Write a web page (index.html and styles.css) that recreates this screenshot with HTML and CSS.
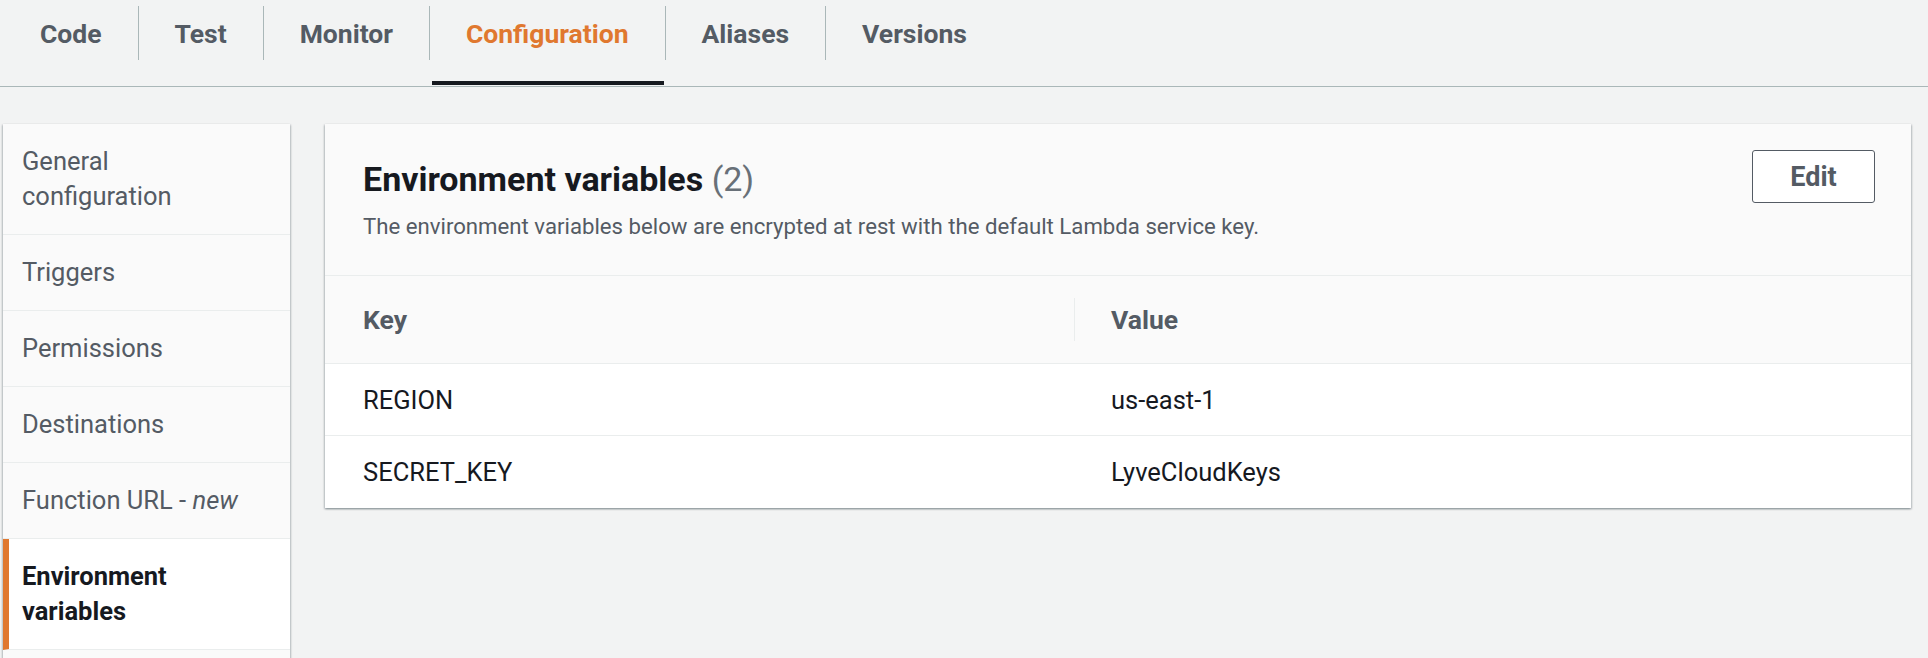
FILE: index.html
```html
<!DOCTYPE html>
<html lang="en">
<head>
<meta charset="utf-8">
<title>Lambda configuration</title>
<link rel="stylesheet" href="styles.css">
</head>
<body>
<nav class="tabs">
  <div class="tab"><span class="tab-label">Code</span><span class="tab-ind"></span></div>
  <div class="tab"><span class="tab-label sep">Test</span><span class="tab-ind"></span></div>
  <div class="tab"><span class="tab-label sep">Monitor</span><span class="tab-ind"></span></div>
  <div class="tab active"><span class="tab-label sep">Configuration</span><span class="tab-ind"></span></div>
  <div class="tab"><span class="tab-label sep">Aliases</span><span class="tab-ind"></span></div>
  <div class="tab"><span class="tab-label sep">Versions</span><span class="tab-ind"></span></div>
</nav>
<main class="main">
  <aside class="side">
    <div class="side-item">General<br>configuration</div>
    <div class="side-item">Triggers</div>
    <div class="side-item">Permissions</div>
    <div class="side-item">Destinations</div>
    <div class="side-item">Function URL - <em>new</em></div>
    <div class="side-item active">Environment<br>variables</div>
    <div class="side-item empty"></div>
  </aside>
  <section class="card">
    <header class="card-head">
      <div class="card-title">
        <h2 class="title">Environment variables <span class="count">(2)</span></h2>
        <p class="desc">The environment variables below are encrypted at rest with the default Lambda service key.</p>
      </div>
      <button class="btn">Edit</button>
    </header>
    <div class="table">
      <div class="th">Key</div>
      <div class="th"><span class="th-sep">Value</span></div>
      <div class="td">REGION</div>
      <div class="td td-val">us-east-1</div>
      <div class="td">SECRET_KEY</div>
      <div class="td td-val">LyveCloudKeys</div>
    </div>
  </section>
</main>
</body>
</html>
```
FILE: styles.css
```css
* { box-sizing: border-box; }
html, body { margin: 0; padding: 0; }
body {
  background: #f2f3f3;
  font-family: Roboto, "Liberation Sans", Arial, sans-serif;
  color: #16191f;
  width: 1928px;
  height: 658px;
  overflow: hidden;
}

/* Tabs */
.tabs {
  display: flex;
  padding-left: 4px;
  border-bottom: 1px solid #aab7b8;
  height: 87px;
}
.tab {
  display: flex;
  flex-direction: column;
  padding-top: 6px;
}
.tab-label {
  height: 54px;
  display: flex;
  align-items: center;
  padding: 0 36px;
  font-size: 26.5px;
  font-weight: 700;
  color: #545b64;
}
.tab-label.sep { border-left: 1px solid #aab7b8; }
.tab.active .tab-label { color: #e0782f; }
.tab-ind {
  height: 4px;
  margin: 21px 1px 0 3px;
}
.tab.active .tab-ind { background: #16191f; }

/* Main area */
.main {
  display: flex;
  gap: 35px;
  padding: 37px 17px 0 3px;
}

/* Side nav */
.side {
  width: 287px;
  flex: none;
  background: #fafafa;
  box-shadow: 0 1px 2px 0 rgba(0, 28, 36, 0.3), 1px 1px 2px 0 rgba(0, 28, 36, 0.15), -1px 1px 2px 0 rgba(0, 28, 36, 0.15);
}
.side-item {
  padding: 20px 8px 20px 19px;
  font-size: 25.5px;
  line-height: 35px;
  color: #545b64;
  border-bottom: 1px solid #eaeded;
}
.side-item em { font-style: italic; }
.side-item.active {
  background: #fff;
  color: #16191f;
  font-weight: 700;
  border-left: 6px solid #e0782f;
  padding-left: 13px;
}
.side-item.empty { height: 75px; }

/* Card */
.card {
  flex: 1;
  align-self: flex-start;
  background: #fff;
  box-shadow: 0 1px 2px 0 rgba(0, 28, 36, 0.3), 1px 1px 2px 0 rgba(0, 28, 36, 0.15), -1px 1px 2px 0 rgba(0, 28, 36, 0.15);
}
.card-head {
  display: flex;
  justify-content: space-between;
  align-items: flex-start;
  background: #fafafa;
  padding: 26px 36px 34px 38px;
  border-bottom: 1px solid #eaeded;
}
.title {
  margin: 9px 0 0;
  font-size: 34px;
  line-height: 40px;
  font-weight: 700;
  color: #16191f;
}
.count { font-weight: 400; color: #687078; }
.desc {
  margin: 12px 0 0;
  font-size: 22.2px;
  line-height: 30px;
  color: #545b64;
}
.btn {
  width: 123px;
  height: 53px;
  background: #fff;
  border: 1px solid #545b64;
  border-radius: 3px;
  font-family: inherit;
  font-size: 27px;
  font-weight: 700;
  color: #545b64;
}

/* Table */
.table {
  display: grid;
  grid-template-columns: 749px 1fr;
}
.th {
  height: 88px;
  display: flex;
  align-items: center;
  background: #fafafa;
  border-bottom: 1px solid #eaeded;
  font-size: 26.5px;
  font-weight: 700;
  color: #545b64;
  padding-left: 38px;
}
.th:nth-child(2) { padding-left: 0; }
.th-sep {
  height: 43px;
  display: flex;
  align-items: center;
  border-left: 1px solid #eaeded;
  padding-left: 36px;
}
.td {
  height: 72px;
  display: flex;
  align-items: center;
  font-size: 25.5px;
  color: #16191f;
  padding-left: 38px;
  border-bottom: 1px solid #eaeded;
}
.td-val { padding-left: 37px; }
.td:nth-last-child(-n+2) { border-bottom: 0; }
```
